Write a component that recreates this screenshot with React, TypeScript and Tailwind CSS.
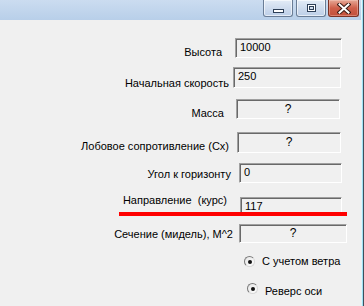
import React from "react";

function Box({ className, children, center }: { className: string; children: React.ReactNode; center?: boolean }) {
  return (
    <div
      className={
        "shrink-0 border border-t-[#a0a0a0] border-l-[#a0a0a0] border-b-white border-r-white shadow-[inset_1px_1px_0_#696969] bg-[#f0f0f0] text-[11px] leading-[13px] text-black " +
        (center ? "flex items-center justify-center text-[12px] " : "pl-[4px] pt-[2px] ") +
        className
      }
    >
      {children}
    </div>
  );
}

function Radio() {
  return (
    <div className="shrink-0 w-[11px] h-[11px] rounded-full border border-t-[#7a7a7a] border-l-[#7a7a7a] border-r-[#d8d8d8] border-b-[#d8d8d8] bg-gradient-to-br from-[#e6e6e6] to-white flex items-center justify-center">
      <div className="w-[4px] h-[4px] rounded-full bg-[#111]" />
    </div>
  );
}

export default function App() {
  return (
    <div className="w-[364px] h-[306px] flex overflow-hidden font-['Liberation_Sans',Arial,sans-serif] text-[11px] leading-[13px] text-black">
      <div className="w-[361px] flex flex-col">
        {/* title bar */}
        <div className="h-[20px] shrink-0 bg-gradient-to-b from-[#cbdcf0] to-[#b8cfe9] flex justify-end items-start pr-[2px]">
          <div className="w-[30px] h-[17px] rounded-b-[3px] border border-t-0 border-[#6a7d96] bg-gradient-to-b from-[#e3ecf7] via-[#cfdcee] to-[#bccfe8] shadow-[inset_0_0_0_1px_rgba(255,255,255,0.6)] flex items-end justify-center pb-[3px]">
            <svg width="11" height="4" viewBox="0 0 11 4">
              <rect x="0.5" y="0.5" width="10" height="3" fill="#fff" stroke="#2d3f57" />
            </svg>
          </div>
          <div className="ml-[3px] w-[30px] h-[17px] rounded-b-[3px] border border-t-0 border-[#6a7d96] bg-gradient-to-b from-[#e3ecf7] via-[#cfdcee] to-[#bccfe8] shadow-[inset_0_0_0_1px_rgba(255,255,255,0.6)] flex items-start justify-center pt-[4px]">
            <svg width="9" height="8" viewBox="0 0 9 8">
              <rect x="0.5" y="0.5" width="8" height="7" fill="none" stroke="#2d3f57" />
              <rect x="1.5" y="1.5" width="6" height="5" fill="none" stroke="#fff" />
              <rect x="2.5" y="2.5" width="4" height="3" fill="none" stroke="#2d3f57" />
            </svg>
          </div>
          <div className="ml-[2px] w-[31px] h-[17px] rounded-b-[3px] border border-t-0 border-[#7b3226] bg-gradient-to-b from-[#e6a896] via-[#cf5f4a] to-[#c2503c] shadow-[inset_0_0_0_1px_rgba(255,220,210,0.35)] flex items-start justify-center pt-[3px]">
            <svg width="14" height="11" viewBox="0 0 14 11">
              <path d="M2.5 1.5 L11.5 9.5 M11.5 1.5 L2.5 9.5" stroke="#3a1a14" strokeWidth="4" strokeLinecap="square" />
              <path d="M2.5 1.5 L11.5 9.5 M11.5 1.5 L2.5 9.5" stroke="#fff" strokeWidth="2" strokeLinecap="square" />
            </svg>
          </div>
        </div>

        {/* client */}
        <div className="relative flex-1 bg-[#f0f0f0] flex flex-col">
          <div className="flex mt-[18px]">
            <div className="w-[222px] shrink-0 text-right mt-[8px]">Высота</div>
            <Box className="ml-[13px] w-[107px] h-[20px]">10000</Box>
          </div>
          <div className="flex mt-[8px]">
            <div className="w-[229px] shrink-0 text-right mt-[10px]">Начальная скорость</div>
            <Box className="ml-[4px] w-[108px] h-[21px]">250</Box>
          </div>
          <div className="flex mt-[9px]">
            <div className="w-[224px] shrink-0 text-right mt-[8px]">Масса</div>
            <Box center className="ml-[12px] w-[104px] h-[20px]">?</Box>
          </div>
          <div className="flex mt-[12px]">
            <div className="w-[229px] shrink-0 text-right mt-[8px]">Лобовое сопротивление (Cx)</div>
            <Box center className="ml-[8px] w-[104px] h-[21px]">?</Box>
          </div>
          <div className="flex mt-[10px]">
            <div className="w-[231px] shrink-0 text-right mt-[5px]">Угол к горизонту</div>
            <Box className="ml-[8px] w-[103px] h-[20px]">0</Box>
          </div>
          <div className="flex mt-[11px]">
            <div className="w-[227px] shrink-0 text-right whitespace-pre">Направление  (курс)</div>
            <Box className="ml-[13px] mt-[3px] w-[102px] h-[19px]">117</Box>
          </div>
          <div className="flex mt-[8px]">
            <div className="w-[233px] shrink-0 text-right mt-[4px]">Сечение (мидель), M^2</div>
            <Box center className="ml-[6px] w-[108px] h-[19px]">?</Box>
          </div>
          <div className="flex items-center h-[13px] mt-[12px]">
            <div className="ml-[244px]">
              <Radio />
            </div>
            <div className="ml-[7px]">С учетом ветра</div>
          </div>
          <div className="flex items-start mt-[15px]">
            <div className="ml-[247px]">
              <Radio />
            </div>
            <div className="ml-[7px] mt-[2px]">Реверс оси</div>
          </div>

          {/* red annotation line */}
          <div className="absolute left-[119px] top-[192px] w-[228px] h-[4px] bg-[#ff0000]" />
        </div>
      </div>
      <div className="w-[1px] bg-[#e4f4fa]" />
      <div className="w-[1px] bg-[#9fe2f4]" />
      <div className="w-[1px] bg-[#3e4f5c]" />
    </div>
  );
}
